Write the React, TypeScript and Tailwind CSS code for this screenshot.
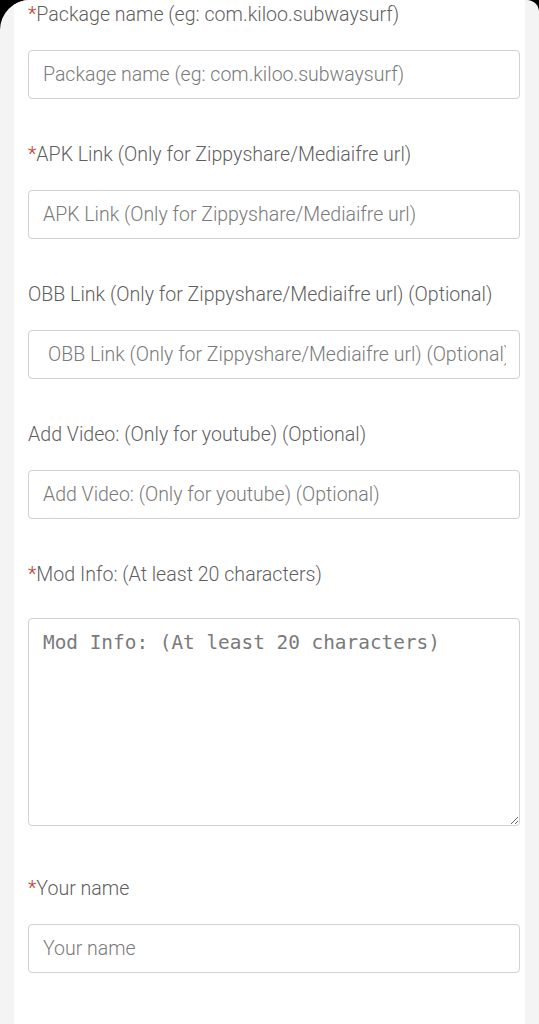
import React from "react";

const Label = ({ text, required }: { text: string; required?: boolean }) => (
  <div className="h-[28px] leading-[28px] text-[19.6px] font-light text-[#5f5f5f] whitespace-nowrap">
    {required && <span className="text-[#c0392b]">*</span>}
    {text}
  </div>
);

const Field = ({
  label,
  required,
  indent,
}: {
  label: string;
  required?: boolean;
  indent?: boolean;
}) => (
  <div className="mb-[42px]">
    <Label text={label} required={required} />
    <input
      readOnly
      placeholder={label}
      className={`mt-[21px] block w-full h-[49px] rounded-[4px] border border-[#d0d0d0] bg-white pr-[13px] text-[19.5px] font-light text-[#555] placeholder:text-[#7a7a7a] outline-none ${
        indent ? "pl-[19px]" : "pl-[14px]"
      }`}
    />
  </div>
);

export default function App() {
  return (
    <div className="bg-black h-[1024px] overflow-hidden font-['Roboto',_'Noto_Sans',sans-serif]">
      <div className="h-full bg-[#f4f4f4] rounded-tl-[30px] rounded-tr-[12px] pl-[14px] pr-[14px] overflow-hidden">
        <div className="h-full bg-white pl-[14px] pr-[5px] pt-[1px]">
          <Field label="Package name (eg: com.kiloo.subwaysurf)" required />
          <Field label="APK Link (Only for Zippyshare/Mediaifre url)" required />
          <Field label="OBB Link (Only for Zippyshare/Mediaifre url) (Optional)" indent />
          <Field label="Add Video: (Only for youtube) (Optional)" />
          <div className="mb-[49px]">
            <Label text="Mod Info: (At least 20 characters)" required />
            <textarea
              readOnly
              placeholder="Mod Info: (At least 20 characters)"
              className="mt-[29px] block w-full h-[208px] rounded-[4px] border border-[#d0d0d0] bg-white px-[14px] pt-[11px] text-[19.4px] leading-[26px] font-['DejaVu_Sans_Mono',monospace] placeholder:text-[#7a7a7a] outline-none"
            />
          </div>
          <Field label="Your name" required />
          <div className="pt-[5px]">
            <Label text="Your email" required />
          </div>
        </div>
      </div>
    </div>
  );
}
